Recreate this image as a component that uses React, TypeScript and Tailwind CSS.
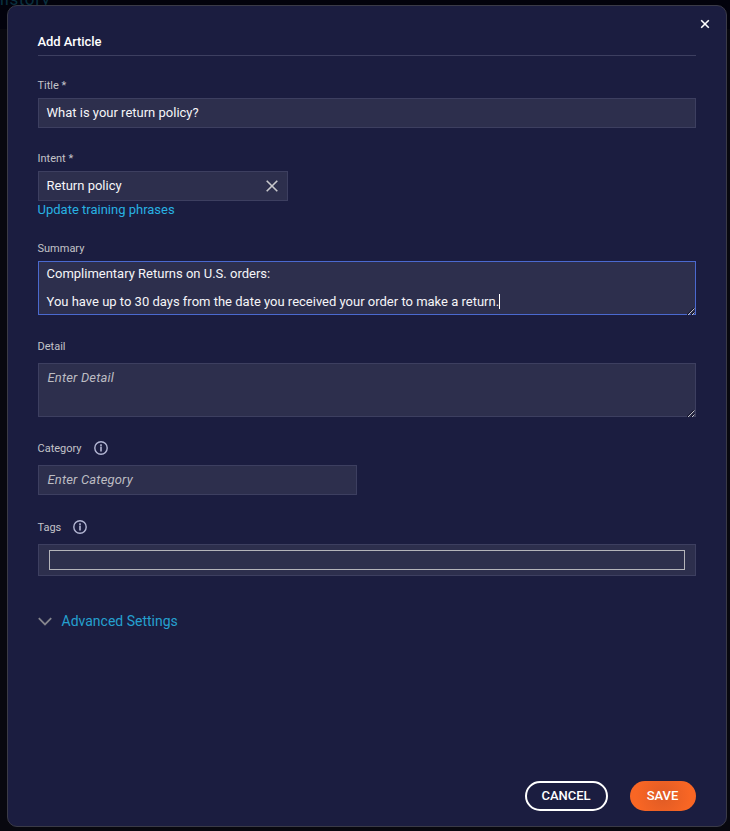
import type { ReactNode } from "react";

function Label({ children, info = false }: { children: ReactNode; info?: boolean }) {
  return (
    <div className="-ml-[0.5px] flex h-4 items-center text-[11px] leading-4 text-[#c3c3c8]">
      <span className="pt-[2px]">{children}</span>
      {info && <InfoIcon />}
    </div>
  );
}

function InfoIcon() {
  return (
    <svg className="ml-[12.1px] size-[14px]" viewBox="0 0 14 14" fill="none" stroke="#b3b6d3">
      <circle cx="7" cy="7" r="6.2" strokeWidth="1.4" />
      <path d="M7 5.6v5M7 3.3v1.6" strokeWidth="1.6" />
    </svg>
  );
}

function ResizeHandle() {
  return (
    <svg className="absolute -right-px -bottom-px h-[7px] w-[9px]" viewBox="0 0 9 7">
      <path d="M0 7L7 0M4 7L7.5 3.5" stroke="#15152c" strokeWidth="1.2" />
      <path d="M1 7L7.5 .5M5 7L7.5 4.5" stroke="#d4d4d8" strokeWidth="0.9" />
    </svg>
  );
}

const field = "border border-[#3d3f60] bg-[#2d2f4d] text-[13px] text-[#f5f5f8]";

export default function App() {
  return (
    <div className="relative h-[831px] w-[730px] overflow-hidden bg-[#08080f] font-[Roboto,sans-serif]">
      <div className="h-[29px] bg-[#02020c]">
        <div className="absolute -top-[11px] left-[-8px] text-[17px] leading-[20px] tracking-[0.6px] text-[#093040]">History</div>
      </div>
      <main className="absolute top-[5px] left-[7px] flex h-[822px] w-[720px] flex-col rounded-[10px] border border-[#3a3a47] bg-[#1b1d40] px-[30px]">
        <button className="absolute top-[13px] right-[16px] size-[10px]" aria-label="Close">
          <svg viewBox="0 0 10 10" className="size-[10px]" stroke="#fff" strokeWidth="1.6">
            <path d="M1.2 1.2l7.6 7.6M8.8 1.2L1.2 8.8" />
          </svg>
        </button>
        <h1 className="mt-[26px] h-6 border-b border-[#3d3f60] text-[13px] leading-5 font-medium text-white">
          <span className="-ml-[0.5px] tracking-[-0.08px]">Add Article</span>
        </h1>

        <section className="mt-[21px]">
          <Label>Title *</Label>
          <div className={`${field} mt-[5px] h-[30px] px-[7.5px] leading-7`}>What is your return policy?</div>
        </section>

        <section className="mt-[22px]">
          <Label>Intent *</Label>
          <div className={`${field} mt-[5px] flex h-[30px] w-[250px] items-center justify-between pr-[9px] pl-[7.5px] leading-7`}>
            <span>Return policy</span>
            <svg className="size-3" viewBox="0 0 12 12" stroke="#c8c8cc" strokeWidth="1.6">
              <path d="M.7.7l10.6 10.6M11.3.7L.7 11.3" />
            </svg>
          </div>
          <a className="-ml-[0.5px] block h-[18px] text-[13px] leading-[18px] text-[#28b1e2]">Update training phrases</a>
        </section>

        <section className="mt-[21px]">
          <Label>Summary</Label>
          <div className="relative mt-[5px] h-[54px] border border-[#4a69cf] bg-[#2d2f4d] px-[7.5px] pt-[5px] text-[13px] leading-[14px] text-[#f5f5f8]">
            <p>Complimentary Returns on U.S. orders:</p>
            <p className="mt-[14px] flex">
              <span>You have up to 30 days from the date you received your order to make a return.</span>
              <span className="-mt-px h-[15px] w-px bg-white" />
            </p>
            <ResizeHandle />
          </div>
        </section>

        <section className="mt-[23px]">
          <Label>Detail</Label>
          <div className={`${field} relative mt-[9px] h-[54px] px-[8.5px] pt-[6px] leading-4`}>
            <span className="tracking-[0.17px] text-[#bcbcc2] italic">Enter Detail</span>
            <ResizeHandle />
          </div>
        </section>

        <section className="mt-[23px]">
          <Label info>Category</Label>
          <div className={`${field} mt-[9px] h-[30px] w-[319px] px-[8.5px] leading-7`}>
            <span className="tracking-[0.17px] text-[#bcbcc2] italic">Enter Category</span>
          </div>
        </section>

        <section className="mt-[24px]">
          <Label info>Tags</Label>
          <div className={`${field} mt-[9px] h-8 px-[10px] py-[5px]`}>
            <div className="h-5 border border-[#b4b4ba]" />
          </div>
        </section>

        <div className="mt-[35px] flex h-5 items-center gap-[9.5px] text-[14px] leading-5 text-[#25a0cf]">
          <svg className="h-[9px] w-[14px]" viewBox="0 0 14 9" fill="none" stroke="#85858c" strokeWidth="1.8">
            <path d="M.8 1.2L7 7.4l6.2-6.2" />
          </svg>
          <span>Advanced Settings</span>
        </div>

        <footer className="mt-auto mb-[15px] flex h-[30px] justify-end gap-[22px] text-[13px] font-medium text-white">
          <button className="h-[30px] w-[83px] rounded-full border-2 border-white pr-px">CANCEL</button>
          <button className="h-[30px] w-[66px] rounded-full bg-[radial-gradient(circle,#df5b25_0%,#f96624_75%)] pr-px">SAVE</button>
        </footer>
      </main>
    </div>
  );
}
